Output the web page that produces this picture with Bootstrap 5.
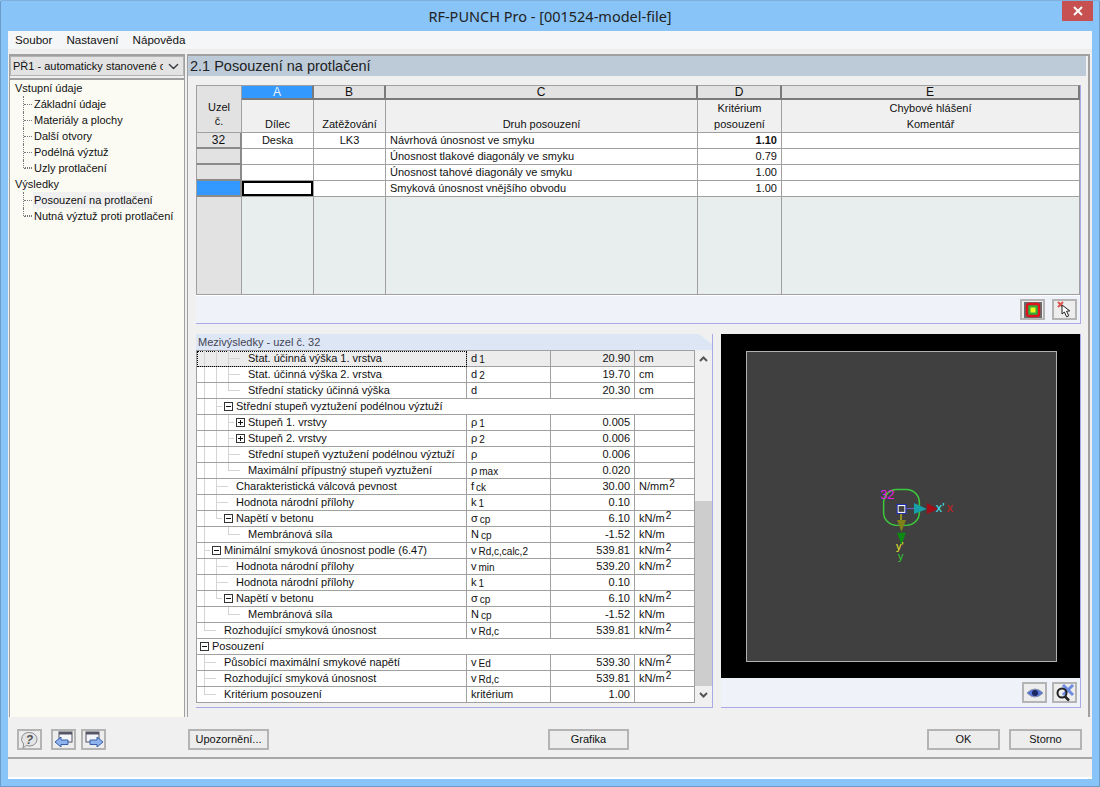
<!DOCTYPE html>
<html lang="cs">
<head>
<meta charset="utf-8">
<title>RF-PUNCH Pro</title>
<link rel="stylesheet" href="https://cdn.jsdelivr.net/npm/bootstrap@5.3.0/dist/css/bootstrap.min.css">
<style>
html,body{margin:0;height:787px;overflow:hidden;background:#88c4f8}
body{font-family:"Liberation Sans",Arial,sans-serif;font-size:11px;line-height:15px;color:#111}
.win{width:1100px;height:787px;border:1px solid #6d9dc6;border-top-color:#7fb0dc;border-radius:3px 3px 0 0;background:#88c4f8;padding:0 7px 7px}
.ttl{height:30px;display:grid;grid-template-columns:1fr auto 1fr;align-items:start;flex:none}
.ttl-text{font-family:"Noto Sans",sans-serif;font-size:14.5px;line-height:30px;color:#222}
.ttl-x{justify-self:end;width:31px;height:20px;background:#c75050;display:flex;align-items:center;justify-content:center;margin-right:-1px}
.client{background:#f0f0f0;border-bottom:2px solid #fff;min-height:0}
.menubar{height:18px;background:#f5f6f7;padding:0 0 0 7px;flex:none;justify-content:flex-start;--bs-navbar-nav-link-padding-x:0}
.menubar .nav-link{padding:0;color:#111;font-size:11.6px;line-height:18px}
.menubar .navbar-nav{gap:14px}
.mainrow{height:668px;padding:5px 2px 0 1px;gap:2px;flex:none;background:linear-gradient(#ececec,#f0f0f0 5px)}
.leftp{width:176px;border-left:1px solid #a0a0a0;border-top:2px solid #a0a0a0;border-right:1px solid #a0a0a0;background:#f0f0f0;flex:none}
.combo{height:20px;border-radius:0;border:1px solid #b4b4b4;background-color:#e3e3e3;font-size:11px;line-height:16px;padding:0 20px 0 2px;color:#111;font-family:inherit;background-position:right 3px center;background-size:13px 11px;box-shadow:none}
.navtree{flex:1;margin-top:2px;border-top:2px solid #a0a0a0;background:#fbfbf3;padding:0 0 0 5px;font-size:11px;line-height:16px;white-space:nowrap}
.navtree ul{margin:0;padding:0 0 0 8px;list-style:none}
.navtree ul li{position:relative;padding-left:11px}
.navtree ul li::before{content:"";position:absolute;left:0;top:0;height:16px;width:9px;border-left:1px dotted #777}
.navtree ul li:last-child::before{height:8px;border-bottom:1px dotted #777}
.navtree ul li::after{content:"";position:absolute;left:1px;top:8px;width:8px;border-top:1px dotted #777}
.navtree .cur{display:inline-block;background:#f0f0f0;width:117px;margin-left:-1px;padding-left:1px}
.rightp{flex:1;border-top:2px solid #a0a0a0;border-left:1px solid #a0a0a0;border-right:2px solid #a0a0a0;min-width:0;background:#f0f0f0}
.headbar{height:20px;margin:0 2px 0 0;background:#bdcbd9;font-size:14.5px;line-height:20px;padding-left:2px;color:#222}
.topgrid{margin:9px 8px 0 8px;width:885px;border-right:1px solid #a9a9e8;border-bottom:1px solid #a9a9e8;background:#eff3f9}
table.gridt{width:884px;table-layout:fixed;border-collapse:separate;border-spacing:0;margin:0;font-size:11px;line-height:16px;color:#111}
.gridt > thead > tr > th,.gridt > tbody > tr > td{padding:0;border:0;border-right:1px solid #a0a0a0;border-bottom:1px solid #a0a0a0;background:#fff;box-shadow:none;font-weight:400;color:#111;white-space:nowrap}
.gridt > thead > tr > th{background:#f0f0f0;text-align:center;vertical-align:bottom}
.gridt > thead > tr > th.lt{height:15px;font-size:12px;line-height:12px;background:#e2e2e2;border-top:1px solid #a0a0a0;border-right:2px solid #7a7a7a;border-bottom:2px solid #7a7a7a;vertical-align:middle}
.gridt > thead > tr > th.lt.on{background:#3399ff;color:#e8f3ff}
.gridt > thead > tr > th.uz{background:#e2e2e2;border-left:1px solid #a0a0a0;border-top:1px solid #a0a0a0;vertical-align:top;padding-top:14px;line-height:14px}
.gridt > thead > tr.r2{height:33px}
.gridt > tbody > tr{height:16px}
.gridt > tbody > tr > td{line-height:15px}
.gridt > tbody > tr > td.rh{background:#e2e2e2;border-left:1px solid #a0a0a0;border-right:2px solid #8a8a8a;border-bottom:2px solid #8a8a8a;text-align:center;font-size:12px;line-height:14px}
.gridt > tbody > tr > td.rh.on{background:#3399ff}
.gridt > tbody > tr > td.curcell{box-shadow:inset 0 0 0 2px #000}
.gridt > tbody > tr > td.tx{padding-left:4px}
.gridt > tbody > tr > td.num{text-align:right;padding-right:4px}
.gridt > tbody > tr.fill{height:98px}
.gridt > tbody > tr.fill > td{background:#e8eeee}
.gridt > tbody > tr.fill > td.rh{background:#e2e2e2;border-right:1px solid #a0a0a0;border-bottom:1px solid #a0a0a0}
.tbar{height:28px;gap:7px;padding-right:3px;border-top:1px solid #fff}
.ibtn{width:25px;height:21px;padding:0;border:2px solid #b4b4b4;border-radius:0;background:#ededed;display:inline-flex;align-items:center;justify-content:center}
.lowrow{margin:10px 8px 0 8px;width:885px;gap:8px}
.leftb{width:517px;height:374px;border-right:1px solid #a9a9e8;border-bottom:1px solid #a9a9e8}
.tabh{height:16px;background:#dce6f4;clip-path:polygon(0 0,503px 0,516px 10px,516px 16px,0 16px);font-size:11px;line-height:16px;padding-left:2px;color:#445}
table.rest{width:499px;flex:none;table-layout:fixed;border-collapse:separate;border-spacing:0;margin:0;font-size:11px;line-height:15px;color:#111;border-left:1px solid #a0a0a0;border-top:1px solid #a0a0a0}
.rest > tbody > tr{height:16px}
.rest > tbody > tr > td{padding:0 0 0 4px;border:0;border-right:1px solid #a0a0a0;border-bottom:1px solid #a0a0a0;background:#fff;box-shadow:none;color:#111;white-space:nowrap;line-height:15px}
.rest > tbody > tr > td.num{text-align:right;padding:0 4px 0 0}
.rest > tbody > tr > td.tc{padding:0 0 0 1px}
.rest > tbody > tr.sel > td{background:#ececec}
.rest > tbody > tr.sel > td.tc{outline:1px dotted #000;outline-offset:-1px}
.trow{display:flex;align-items:stretch;height:15px}
.trow i{display:block;width:12px;height:15px;flex:none;position:relative}
.trow span{padding-left:2px}
.tv{background:linear-gradient(#d4d4d4,#d4d4d4) 6px 0/1px 15px no-repeat}
.tt{background:linear-gradient(#d4d4d4,#d4d4d4) 6px 0/1px 15px no-repeat,linear-gradient(#d4d4d4,#d4d4d4) 6px 7px/6px 1px no-repeat}
.tl{background:linear-gradient(#d4d4d4,#d4d4d4) 6px 0/1px 8px no-repeat,linear-gradient(#d4d4d4,#d4d4d4) 6px 7px/6px 1px no-repeat}
.th{background:linear-gradient(#d4d4d4,#d4d4d4) 0 7px/6px 1px no-repeat}
.tm::before,.tp::before{content:"";position:absolute;left:2px;top:3px;width:9px;height:9px;border:1px solid #333;background:#fff}
.tm::after,.tp::after{content:"";position:absolute;left:4px;top:7px;width:5px;height:1px;background:#111}
.tp b{position:absolute;left:6px;top:5px;width:1px;height:5px;background:#111;z-index:1}
.rest sub{font-size:10px;margin-left:2px;bottom:-.1em}
.rest sup{font-size:10px;margin-left:1px;top:-.3em}
.sbar{width:17px;height:353px;background:#f0f0f0;flex:none}
.sbtn{height:17px;flex:none;display:flex;align-items:center;justify-content:center}
.strack{flex:1;display:flex;flex-direction:column;justify-content:flex-end}
.sthumb{height:185px;background:#cdcdcd}
.rightb{width:360px;height:374px;border-right:1px solid #a9a9e8;border-bottom:1px solid #a9a9e8;background:#eff3f9}
.blackb{height:344px;background:#000;padding:17px 24px 0 25px}
.scene{display:block;background:#404040;border:1px solid #b0b0b0;width:311px;height:311px}
.scene text{font-family:"Liberation Sans",sans-serif}
.tbar2{height:29px;gap:5px;padding-right:3px}
.foot{height:40px;padding:12px 9px 0 9px;flex:none;background:#f0f0f0}
.wbtn{height:21px;padding:0;border:2px solid #b4b4b4;border-radius:0;background:#ededed;color:#111;font-size:11px;line-height:17px}
.w81{width:81px}.w73{width:73px}
.g0{margin-left:9px}.g00{margin-left:5px}.g1{margin-left:82px}.g2{margin-left:279px}.g3{margin-left:298px}
.sts{height:20px;border-top:2px solid #a8a8a8;background:#f0f0f0;flex:none}
</style>
</head>
<body>
<div class="win d-flex flex-column">
  <div class="ttl">
    <span></span>
    <span class="ttl-text">RF-PUNCH Pro - [001524-model-file]</span>
    <span class="ttl-x"><svg width="10" height="10" viewBox="0 0 10 10"><path d="M1 1L9 9M9 1L1 9" stroke="#fff" stroke-width="2"/></svg></span>
  </div>
  <div class="client d-flex flex-column flex-grow-1">
    <nav class="navbar navbar-expand menubar">
      <ul class="navbar-nav">
        <li class="nav-item"><a class="nav-link" href="#">Soubor</a></li>
        <li class="nav-item"><a class="nav-link" href="#">Nastavení</a></li>
        <li class="nav-item"><a class="nav-link" href="#">Nápověda</a></li>
      </ul>
    </nav>
    <div class="d-flex mainrow">
      <aside class="leftp d-flex flex-column">
        <select class="form-select combo"><option>PŘ1 - automaticky stanovené o</option></select>
        <div class="navtree">
          <div>Vstupní údaje</div>
          <ul>
            <li>Základní údaje</li>
            <li>Materiály a plochy</li>
            <li>Další otvory</li>
            <li>Podélná výztuž</li>
            <li>Uzly protlačení</li>
          </ul>
          <div>Výsledky</div>
          <ul>
            <li><span class="cur">Posouzení na protlačení</span></li>
            <li>Nutná výztuž proti protlačení</li>
          </ul>
        </div>
      </aside>
      <section class="rightp d-flex flex-column">
        <div class="headbar">2.1 Posouzení na protlačení</div>
        <div class="topgrid">
          <table class="table gridt">
            <colgroup><col style="width:46px"><col style="width:72px"><col style="width:72px"><col style="width:312px"><col style="width:84px"><col style="width:298px"></colgroup>
            <thead>
              <tr>
                <th class="uz" rowspan="2">Uzel<br>č.</th>
                <th class="lt on">A</th><th class="lt">B</th><th class="lt">C</th><th class="lt">D</th><th class="lt">E</th>
              </tr>
              <tr class="r2">
                <th>Dílec</th><th>Zatěžování</th><th>Druh posouzení</th><th>Kritérium<br>posouzení</th><th>Chybové hlášení<br>Komentář</th>
              </tr>
            </thead>
            <tbody>
              <tr><td class="rh">32</td><td class="text-center">Deska</td><td class="text-center">LK3</td><td class="tx">Návrhová únosnost ve smyku</td><td class="num fw-bold">1.10</td><td></td></tr>
              <tr><td class="rh"></td><td></td><td></td><td class="tx">Únosnost tlakové diagonály ve smyku</td><td class="num">0.79</td><td></td></tr>
              <tr><td class="rh"></td><td></td><td></td><td class="tx">Únosnost tahové diagonály ve smyku</td><td class="num">1.00</td><td></td></tr>
              <tr><td class="rh on"></td><td class="curcell"></td><td></td><td class="tx">Smyková únosnost vnějšího obvodu</td><td class="num">1.00</td><td></td></tr>
              <tr class="fill"><td class="rh"></td><td></td><td></td><td></td><td></td><td></td></tr>
            </tbody>
          </table>
          <div class="tbar d-flex justify-content-end align-items-center">
            <button class="btn ibtn" type="button" aria-label="Barvy"><svg width="18" height="16" viewBox="0 0 18 16"><rect width="18" height="16" fill="#6b6b6b"/><rect x="3" y="2" width="12" height="12" rx="2" fill="#2fae3a" stroke="#e0121c" stroke-width="2.400"/><rect x="6.500" y="5.500" width="5" height="5" fill="#f4f41c"/></svg></button>
            <button class="btn ibtn" type="button" aria-label="Výběr"><svg width="20" height="18" viewBox="0 0 20 18"><path d="M3 1L8 6M8 1L3 6" stroke="#d9534f" stroke-width="2"/><path d="M7 4l0 9 2.400-2 2.200 4.800 2.200-1-2.200-4.600 3.200-.3z" fill="#fff" stroke="#222" stroke-width="1"/></svg></button>
          </div>
        </div>
        <div class="d-flex lowrow">
          <div class="leftb">
            <div class="tabh">Mezivýsledky - uzel č. 32</div>
            <div class="d-flex">
              <table class="table rest">
                <colgroup><col style="width:270px"><col style="width:84px"><col style="width:84px"><col style="width:60px"></colgroup>
                <tbody>
                  <tr class="sel"><td class="tc"><div class="trow"><i class="tv"></i><i class="tv"></i><i class="tt"></i><i class="th"></i><span>Stat. účinná výška 1. vrstva</span></div></td><td>d<sub>1</sub></td><td class="num">20.90</td><td>cm</td></tr>
                  <tr><td class="tc"><div class="trow"><i class="tv"></i><i class="tv"></i><i class="tt"></i><i class="th"></i><span>Stat. účinná výška 2. vrstva</span></div></td><td>d<sub>2</sub></td><td class="num">19.70</td><td>cm</td></tr>
                  <tr><td class="tc"><div class="trow"><i class="tv"></i><i class="tv"></i><i class="tl"></i><i class="th"></i><span>Střední staticky účinná výška</span></div></td><td>d</td><td class="num">20.30</td><td>cm</td></tr>
                  <tr><td class="tc" colspan="4"><div class="trow"><i class="tv"></i><i class="tt"></i><i class="tm"></i><span>Střední stupeň vyztužení podélnou výztuží</span></div></td></tr>
                  <tr><td class="tc"><div class="trow"><i class="tv"></i><i class="tv"></i><i class="tt"></i><i class="tp"><b></b></i><span>Stupeň 1. vrstvy</span></div></td><td>ρ<sub>1</sub></td><td class="num">0.005</td><td></td></tr>
                  <tr><td class="tc"><div class="trow"><i class="tv"></i><i class="tv"></i><i class="tt"></i><i class="tp"><b></b></i><span>Stupeň 2. vrstvy</span></div></td><td>ρ<sub>2</sub></td><td class="num">0.006</td><td></td></tr>
                  <tr><td class="tc"><div class="trow"><i class="tv"></i><i class="tv"></i><i class="tt"></i><i class="th"></i><span>Střední stupeň vyztužení podélnou výztuží</span></div></td><td>ρ</td><td class="num">0.006</td><td></td></tr>
                  <tr><td class="tc"><div class="trow"><i class="tv"></i><i class="tv"></i><i class="tl"></i><i class="th"></i><span>Maximální přípustný stupeň vyztužení</span></div></td><td>ρ<sub>max</sub></td><td class="num">0.020</td><td></td></tr>
                  <tr><td class="tc"><div class="trow"><i class="tv"></i><i class="tt"></i><i class="th"></i><span>Charakteristická válcová pevnost</span></div></td><td>f<sub>ck</sub></td><td class="num">30.00</td><td>N/mm<sup>2</sup></td></tr>
                  <tr><td class="tc"><div class="trow"><i class="tv"></i><i class="tt"></i><i class="th"></i><span>Hodnota národní přílohy</span></div></td><td>k<sub>1</sub></td><td class="num">0.10</td><td></td></tr>
                  <tr><td class="tc"><div class="trow"><i class="tv"></i><i class="tl"></i><i class="tm"></i><span>Napětí v betonu</span></div></td><td>σ<sub>cp</sub></td><td class="num">6.10</td><td>kN/m<sup>2</sup></td></tr>
                  <tr><td class="tc"><div class="trow"><i class="tv"></i><i></i><i class="tl"></i><i class="th"></i><span>Membránová síla</span></div></td><td>N<sub>cp</sub></td><td class="num">-1.52</td><td>kN/m</td></tr>
                  <tr><td class="tc"><div class="trow"><i class="tt"></i><i class="tm"></i><span>Minimální smyková únosnost podle (6.47)</span></div></td><td>v<sub>Rd,c,calc,2</sub></td><td class="num">539.81</td><td>kN/m<sup>2</sup></td></tr>
                  <tr><td class="tc"><div class="trow"><i class="tv"></i><i class="tt"></i><i class="th"></i><span>Hodnota národní přílohy</span></div></td><td>v<sub>min</sub></td><td class="num">539.20</td><td>kN/m<sup>2</sup></td></tr>
                  <tr><td class="tc"><div class="trow"><i class="tv"></i><i class="tt"></i><i class="th"></i><span>Hodnota národní přílohy</span></div></td><td>k<sub>1</sub></td><td class="num">0.10</td><td></td></tr>
                  <tr><td class="tc"><div class="trow"><i class="tv"></i><i class="tl"></i><i class="tm"></i><span>Napětí v betonu</span></div></td><td>σ<sub>cp</sub></td><td class="num">6.10</td><td>kN/m<sup>2</sup></td></tr>
                  <tr><td class="tc"><div class="trow"><i class="tv"></i><i></i><i class="tl"></i><i class="th"></i><span>Membránová síla</span></div></td><td>N<sub>cp</sub></td><td class="num">-1.52</td><td>kN/m</td></tr>
                  <tr><td class="tc"><div class="trow"><i class="tl"></i><i class="th"></i><span>Rozhodující smyková únosnost</span></div></td><td>v<sub>Rd,c</sub></td><td class="num">539.81</td><td>kN/m<sup>2</sup></td></tr>
                  <tr><td class="tc" colspan="4"><div class="trow"><i class="tm"></i><span>Posouzení</span></div></td></tr>
                  <tr><td class="tc"><div class="trow"><i class="tt"></i><i class="th"></i><span>Působící maximální smykové napětí</span></div></td><td>v<sub>Ed</sub></td><td class="num">539.30</td><td>kN/m<sup>2</sup></td></tr>
                  <tr><td class="tc"><div class="trow"><i class="tt"></i><i class="th"></i><span>Rozhodující smyková únosnost</span></div></td><td>v<sub>Rd,c</sub></td><td class="num">539.81</td><td>kN/m<sup>2</sup></td></tr>
                  <tr><td class="tc"><div class="trow"><i class="tl"></i><i class="th"></i><span>Kritérium posouzení</span></div></td><td>kritérium</td><td class="num">1.00</td><td></td></tr>
                </tbody>
              </table>
              <div class="sbar d-flex flex-column">
                <div class="sbtn"><svg width="9" height="6" viewBox="0 0 9 6"><path d="M1 5L4.500 1.500 8 5" fill="none" stroke="#555" stroke-width="2"/></svg></div>
                <div class="strack"><div class="sthumb"></div></div>
                <div class="sbtn"><svg width="9" height="6" viewBox="0 0 9 6"><path d="M1 1L4.500 4.500 8 1" fill="none" stroke="#555" stroke-width="2"/></svg></div>
              </div>
            </div>
          </div>
          <div class="rightb">
            <div class="blackb">
              <svg class="scene" viewBox="746 351 311 311">
                <rect x="883.500" y="489.500" width="36" height="36" rx="13" fill="none" stroke="#3cc83c" stroke-width="1.500"/>
                <text x="880" y="499" font-size="13" fill="#e81ee8">32</text>
                <path d="M905 508.500H915" stroke="#66c" stroke-width="1"/>
                <path d="M901 512V520" stroke="#b0b020" stroke-width="1.500"/>
                <polygon points="914,503 914,514 927,509" fill="#18a0a8"/>
                <polygon points="927,503 927,514 938,509" fill="#a01018"/>
                <polygon points="897,520 906,520 901.500,532" fill="#80801a"/>
                <polygon points="897,533 906,533 901.500,545" fill="#0c8a14"/>
                <rect x="898" y="505.500" width="7" height="7" fill="#404040" stroke="#fff" stroke-width="1.200"/>
                <rect x="897" y="504.500" width="9" height="9" fill="none" stroke="#2030c0" stroke-width="1"/>
                <text x="936" y="512" font-size="13" fill="#40e8f0">x'</text>
                <text x="947" y="512" font-size="13" fill="#c82020">x</text>
                <text x="896" y="550" font-size="11" fill="#f0f020">y'</text>
                <text x="898" y="560" font-size="11" fill="#30d030">y</text>
              </svg>
            </div>
            <div class="tbar2 d-flex justify-content-end align-items-center">
              <button class="btn ibtn" type="button" aria-label="Zobrazit"><svg width="18" height="12" viewBox="0 0 18 12"><path d="M1 6Q9 -2 17 6Q9 14 1 6Z" fill="#5577d8" stroke="#8a93a8"/><circle cx="9" cy="6" r="3" fill="#1c2860"/></svg></button>
              <button class="btn ibtn" type="button" aria-label="Lupa"><svg width="20" height="18" viewBox="0 0 20 18"><path d="M8 1L18 11M18 1L8 11" stroke="#6d8be0" stroke-width="3"/><circle cx="7" cy="9" r="4.500" fill="none" stroke="#222" stroke-width="2"/><path d="M10 12.500L14 16.500" stroke="#222" stroke-width="2.500"/></svg></button>
            </div>
          </div>
        </div>
      </section>
    </div>
    <div class="foot d-flex">
      <button class="btn ibtn" type="button" aria-label="Nápověda"><svg width="19" height="18" viewBox="0 0 19 18"><path d="M9.500 1.500a7.500 6.800 0 1 1-3 13L3 17l.6-4A7.500 6.800 0 0 1 9.500 1.500z" fill="#e4e4e6" stroke="#8c8c90"/><text x="9.500" y="13" text-anchor="middle" font-size="12" font-weight="700" font-style="italic" fill="#555">?</text></svg></button>
      <button class="btn ibtn g0" type="button" aria-label="Zpět"><svg width="20" height="18" viewBox="0 0 20 18"><rect x="5" y="1" width="13" height="10" fill="#f4f6fa" stroke="#556"/><rect x="5" y="1" width="13" height="2.500" fill="#556"/><path d="M1 11l6-5v3h7v4.500H7V16z" fill="#8db4ee" stroke="#3a5fa8"/></svg></button>
      <button class="btn ibtn g00" type="button" aria-label="Vpřed"><svg width="20" height="18" viewBox="0 0 20 18"><rect x="2" y="1" width="13" height="10" fill="#f4f6fa" stroke="#556"/><rect x="2" y="1" width="13" height="2.500" fill="#556"/><path d="M19 11l-6-5v3H6v4.500h7V16z" fill="#8db4ee" stroke="#3a5fa8"/></svg></button>
      <button class="btn wbtn w81 g1" type="button">Upozornění...</button>
      <button class="btn wbtn w81 g2" type="button">Grafika</button>
      <button class="btn wbtn w73 g3" type="button">OK</button>
      <button class="btn wbtn w73 g0" type="button">Storno</button>
    </div>
    <div class="sts"></div>
  </div>
</div>
<script src="https://cdn.jsdelivr.net/npm/bootstrap@5.3.0/dist/js/bootstrap.bundle.min.js"></script>
</body>
</html>
